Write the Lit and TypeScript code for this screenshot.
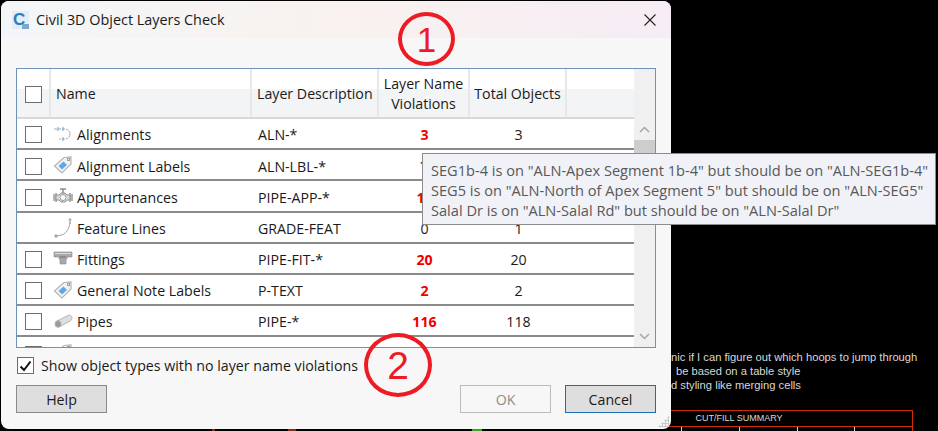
import { LitElement, html, css, svg } from 'lit';
import { customElement } from 'lit/decorators.js';

interface Row {
  name: string;
  icon: string;
  layer: string;
  violations: number;
  total: number;
  noCheck?: boolean;
}

const ROWS: Row[] = [
  { name: 'Alignments', icon: 'align', layer: 'ALN-*', violations: 3, total: 3 },
  { name: 'Alignment Labels', icon: 'tag', layer: 'ALN-LBL-*', violations: 7, total: 7 },
  { name: 'Appurtenances', icon: 'valve', layer: 'PIPE-APP-*', violations: 12, total: 12 },
  { name: 'Feature Lines', icon: 'feature', layer: 'GRADE-FEAT', violations: 0, total: 1, noCheck: true },
  { name: 'Fittings', icon: 'fitting', layer: 'PIPE-FIT-*', violations: 20, total: 20 },
  { name: 'General Note Labels', icon: 'tag', layer: 'P-TEXT', violations: 2, total: 2 },
  { name: 'Pipes', icon: 'pipe', layer: 'PIPE-*', violations: 116, total: 118 },
  { name: '', icon: 'tag', layer: '', violations: -1, total: -1 },
];

const ICONS: Record<string, unknown> = {
  align: svg`
    <path d="M1 5h11c3 0 5 2 5 5" fill="none" stroke="#a9a9a9" stroke-width="1" stroke-dasharray="3 1"/>
    <path d="M17 10c0 3-2 5-5 5H6" fill="none" stroke="#a9a9a9" stroke-width="1" stroke-dasharray="3 1"/>
    <path d="M5 3v4M10 3v4M10 13v4" stroke="#6aa6d8" stroke-width="1"/>`,
  tag: svg`
    <path d="M1.500 11 11 2.500l7-.5v7L9 18z" fill="#f2f2f2" stroke="#b5b5b5" stroke-width="1.200"/>
    <path d="M5.500 11 10.500 6.500l3.500 3.500-5 4.500z" fill="#5fa8e8"/>
    <rect x="14.500" y="3.500" width="2" height="2" fill="none" stroke="#a0a0a0"/>`,
  valve: svg`
    <path d="M1 8v7M3 7v9M17 7v9M19 8v7" stroke="#9a9a9a" stroke-width="1.500"/>
    <path d="M3 9h3l2-2h4l2 2h3v5h-3l-2 2H8l-2-2H3z" fill="#dcdcdc" stroke="#8e8e8e"/>
    <circle cx="10" cy="11.500" r="3" fill="#fafafa" stroke="#9a9a9a"/>
    <path d="M10 7V3M7 3h6" stroke="#8e8e8e" stroke-width="1.500"/>`,
  feature: svg`
    <path d="M2 19c9 0 14-4 15-14" fill="none" stroke="#a5a5a5" stroke-width="1"/>
    <path d="M17 1v6M15.500 3h3M3 17v4M1 19h4" stroke="#9a9a9a" stroke-width="1"/>`,
  fitting: svg`
    <path d="M1 3h18v5h-5v2h-1v5H7v-5H6V8H1z" fill="#a8a8a8" stroke="#8a8a8a" stroke-width=".6"/>
    <path d="M2 4.500h16" stroke="#dcdcdc" stroke-width="1"/>
    <path d="M7 8h6" stroke="#6e6e6e" stroke-width="1"/>`,
  pipe: svg`
    <path d="M4 10 15 4.500c2-1 4 .5 4 2s-.5 2.500-2 3.500L7 15.500z" fill="#dedede" stroke="#b5b5b5"/>
    <ellipse cx="5" cy="13" rx="3" ry="3.300" fill="#9a9a9a" stroke="#b0b0b0"/>`,
};

const TOOLTIP = [
  'SEG1b-4 is on "ALN-Apex Segment 1b-4" but should be on "ALN-SEG1b-4"',
  'SEG5 is on "ALN-North of Apex Segment 5" but should be on "ALN-SEG5"',
  'Salal Dr is on "ALN-Salal Rd" but should be on "ALN-Salal Dr"',
];

@customElement('app-root')
export class AppRoot extends LitElement {
  static styles = css`
    :host {
      display: block;
      position: relative;
      width: 938px;
      height: 431px;
      overflow: hidden;
      background: #000;
      font-family: 'Open Sans', 'Noto Sans', sans-serif;
      font-size: 14.200px;
      color: #1a1a1a;
    }

    /* drawing behind the dialog */
    .cad {
      position: absolute;
      left: 640px;
      top: 350px;
      width: 298px;
      color: #d8d8d8;
      font-family: 'Liberation Sans', sans-serif;
      font-size: 11.200px;
      line-height: 14px;
    }
    .cad p { margin: 0; position: absolute; white-space: nowrap; }
    .l1 { left: 31px; top: 0; }
    .l2 { left: 36px; top: 14px; }
    .l3 { left: 31px; top: 28px; }
    .cad-table {
      position: absolute;
      left: -75px;
      top: 60px;
      width: 348px;
      height: 17px;
      border: 1px solid #d02c08;
      text-align: center;
      line-height: 15px;
      font-size: 9px;
      box-sizing: border-box;
    }
    .cad-ticks {
      position: absolute;
      left: 41px;
      top: 77px;
      width: 232px;
      height: 5px;
      display: flex;
    }
    .cad-ticks span { flex: 1; border-left: 1px solid #d8d8d8; }
    .cad-ticks span:last-child { border-right: 1px solid #d02c08; }
    .strip {
      position: absolute;
      left: 200px;
      bottom: 0;
      width: 300px;
      height: 2px;
      background:
        linear-gradient(90deg, transparent 272px, #3aa51a 272px 282px, transparent 282px),
        linear-gradient(90deg, transparent 12px, #8a2a10 12px 15px, transparent 15px 88px, #8a2a10 88px 96px, transparent 96px);
    }

    .dialog {
      position: relative;
      margin: 1px 0 0 1px;
      width: 670px;
      height: 428px;
      box-sizing: border-box;
      background: #f7f7f7;
      border-radius: 8px;
      display: flex;
      flex-direction: column;
      overflow: hidden;
    }
    .title {
      height: 37px;
      flex: none;
      display: flex;
      align-items: center;
      padding: 0 14px 0 10px;
      gap: 6px;
      background: linear-gradient(90deg, #f3f6f9 0%, #f9f2ee 50%, #f5ecf5 100%);
      font-size: 14.400px;
    }
    .title span { flex: 1; }
    .body {
      flex: 1;
      display: flex;
      flex-direction: column;
      padding: 30px 15px 15px 15px;
    }
    .panel {
      height: 280px;
      box-sizing: border-box;
      border: 1px solid #6f93b8;
      background: #fff;
      display: flex;
      overflow: hidden;
    }
    .grid { flex: 1; min-width: 0; }
    .row, .head {
      display: grid;
      grid-template-columns: 34px 201px 127px 91px 97px 1fr;
      align-items: center;
    }
    .head {
      height: 50px;
      box-sizing: border-box;
      background: linear-gradient(#fff 0 20px, #f3f4f6 20px);
      border-bottom: 2px solid #d8d8d8;
    }
    .head > div {
      height: 100%;
      display: flex;
      align-items: center;
      box-sizing: border-box;
      border-right: 2px solid #e6e7e9;
      line-height: 20px;
      padding-top: 2px;
    }
    .head .h-name { padding-left: 5px; }
    .head .h-desc { padding-left: 5px; }
    .head .h-num { justify-content: center; text-align: center; }
    .head .h-end { border: 0; }
    .row {
      height: 31.200px;
      box-sizing: border-box;
      border-bottom: 2px solid #8b8b8b;
      padding-top: 2.500px;
    }
    .row:last-child { border-bottom: 0; }
    .box {
      width: 17px;
      height: 17px;
      box-sizing: border-box;
      border: 1px solid #6d6d6d;
      background: #fff;
      margin-left: 8px;
    }
    .cell-name { display: flex; align-items: center; gap: 4px; padding-left: 2px; }
    .cell-name svg { flex: none; }
    .cell-layer { padding-left: 6px; }
    .cell-num { text-align: center; }
    .bad { color: #f00000; font-weight: 700; }

    .scroll {
      width: 21px;
      flex: none;
      background: #f0f0f0;
      display: flex;
      flex-direction: column;
    }
    .scroll-top { height: 50px; background: #fff; opacity: 0; flex: none; }
    .arrow { height: 21px; display: flex; align-items: center; justify-content: center; flex: none; }
    .thumb { height: 80px; background: #cdcdcd; flex: none; }
    .scroll-fill { flex: 1; }

    .show {
      display: flex;
      align-items: center;
      gap: 7px;
      margin: 9px 0 0 1px;
      height: 17px;
    }
    .show .box {
      margin: 0;
      display: flex;
      align-items: center;
      justify-content: center;
    }
    .actions { display: flex; align-items: center; margin-top: 11px; gap: 14px; }
    .spacer { flex: 1; }
    .btn {
      width: 91px;
      height: 28px;
      box-sizing: border-box;
      background: #dedede;
      border: 1px solid #8a8a8a;
      display: flex;
      align-items: center;
      justify-content: center;
    }
    .btn.off { background: transparent; border-color: #bcbcbc; color: #8d8d8d; }
    .btn.main { border: 1.500px solid #1c6db5; }
    .grip {
      position: absolute;
      right: 2px;
      bottom: 2px;
      width: 11px;
      height: 11px;
      background-image: radial-gradient(#c6c6c6 1px, transparent 1.200px);
      background-size: 3px 3px;
      clip-path: polygon(100% 0, 100% 100%, 0 100%);
    }

    /* hover tooltip over the list */
    .tip {
      position: absolute;
      left: 422px;
      top: 153px;
      width: 514px;
      height: 72px;
      box-sizing: border-box;
      padding: 6px 0 0 8px;
      background: #f1f2f7;
      border: 1px solid #8c8c8c;
      color: #585858;
      font-size: 14.600px;
      line-height: 20px;
      white-space: nowrap;
    }

    /* hand-drawn callouts */
    .mark {
      position: absolute;
      box-sizing: border-box;
      border: 4.500px solid #ed1c24;
      border-radius: 50%;
      color: #ed1c24;
      display: flex;
      align-items: center;
      justify-content: center;
      font-family: 'Liberation Sans', sans-serif;
      line-height: 1;
    }
    .m1 { left: 398px; top: 12px; width: 57px; height: 54px; font-size: 35px; }
    .m2 { left: 364px; top: 333px; width: 68px; height: 64px; font-size: 39px; }
  `;

  private _icon(name: string) {
    return html`<svg width="20" height="22" viewBox="0 0 20 22">${ICONS[name]}</svg>`;
  }

  private _row(r: Row) {
    return html`
      <div class="row">
        ${r.noCheck ? html`<div></div>` : html`<div class="box"></div>`}
        <div class="cell-name">${this._icon(r.icon)}<span>${r.name}</span></div>
        <div class="cell-layer">${r.layer}</div>
        <div class="cell-num ${r.violations > 0 ? 'bad' : ''}">${r.violations >= 0 ? r.violations : ''}</div>
        <div class="cell-num">${r.total >= 0 ? r.total : ''}</div>
        <div></div>
      </div>
    `;
  }

  render() {
    return html`
      <div class="cad">
        <p class="l1">nic if I can figure out which hoops to jump through</p>
        <p class="l2">be based on a table style</p>
        <p class="l3">d styling like merging cells</p>
        <div class="cad-table">CUT/FILL SUMMARY</div>
        <div class="cad-ticks"><span></span><span></span><span></span><span></span></div>
      </div>
      <div class="strip"></div>

      <div class="dialog">
        <div class="title">
          <svg width="19" height="20" viewBox="0 0 19 20">
            <rect x="1" y="1" width="17" height="18" fill="#e4edf4"/>
            <text x="2" y="15" font-family="Liberation Sans" font-weight="700" font-size="17" fill="#2b7cc0">C</text>
            <rect x="11" y="14" width="7" height="5" fill="#7fa9c9"/>
          </svg>
          <span>Civil 3D Object Layers Check</span>
          <svg width="14" height="14" viewBox="0 0 14 14">
            <path d="M1.500 1.500l11 11M12.500 1.500l-11 11" stroke="#222" stroke-width="1.100" fill="none"/>
          </svg>
        </div>
        <div class="body">
          <div class="panel">
            <div class="grid">
              <div class="head">
                <div><div class="box"></div></div>
                <div class="h-name">Name</div>
                <div class="h-desc">Layer Description</div>
                <div class="h-num">Layer Name<br />Violations</div>
                <div class="h-num">Total Objects</div>
                <div class="h-end"></div>
              </div>
              ${ROWS.map((r) => this._row(r))}
            </div>
            <div class="scroll">
              <div class="scroll-top"></div>
              <div class="arrow">
                <svg width="11" height="7" viewBox="0 0 11 7"><path d="M1 6l4.500-4.500L10 6" fill="none" stroke="#a6a6a6" stroke-width="1.500"/></svg>
              </div>
              <div class="thumb"></div>
              <div class="scroll-fill"></div>
              <div class="arrow">
                <svg width="11" height="7" viewBox="0 0 11 7"><path d="M1 1l4.500 4.500L10 1" fill="none" stroke="#a6a6a6" stroke-width="1.500"/></svg>
              </div>
            </div>
          </div>
          <div class="show">
            <div class="box">
              <svg width="13" height="12" viewBox="0 0 13 12"><path d="M1.500 6.500l3.500 3.500 6.500-8.500" fill="none" stroke="#111" stroke-width="2"/></svg>
            </div>
            <span>Show object types with no layer name violations</span>
          </div>
          <div class="actions">
            <div class="btn">Help</div>
            <div class="spacer"></div>
            <div class="btn off">OK</div>
            <div class="btn main">Cancel</div>
          </div>
        </div>
        <div class="grip"></div>
      </div>

      <div class="tip">${TOOLTIP.map((t) => html`<div>${t}</div>`)}</div>
      <div class="mark m1">1</div>
      <div class="mark m2">2</div>
    `;
  }
}
